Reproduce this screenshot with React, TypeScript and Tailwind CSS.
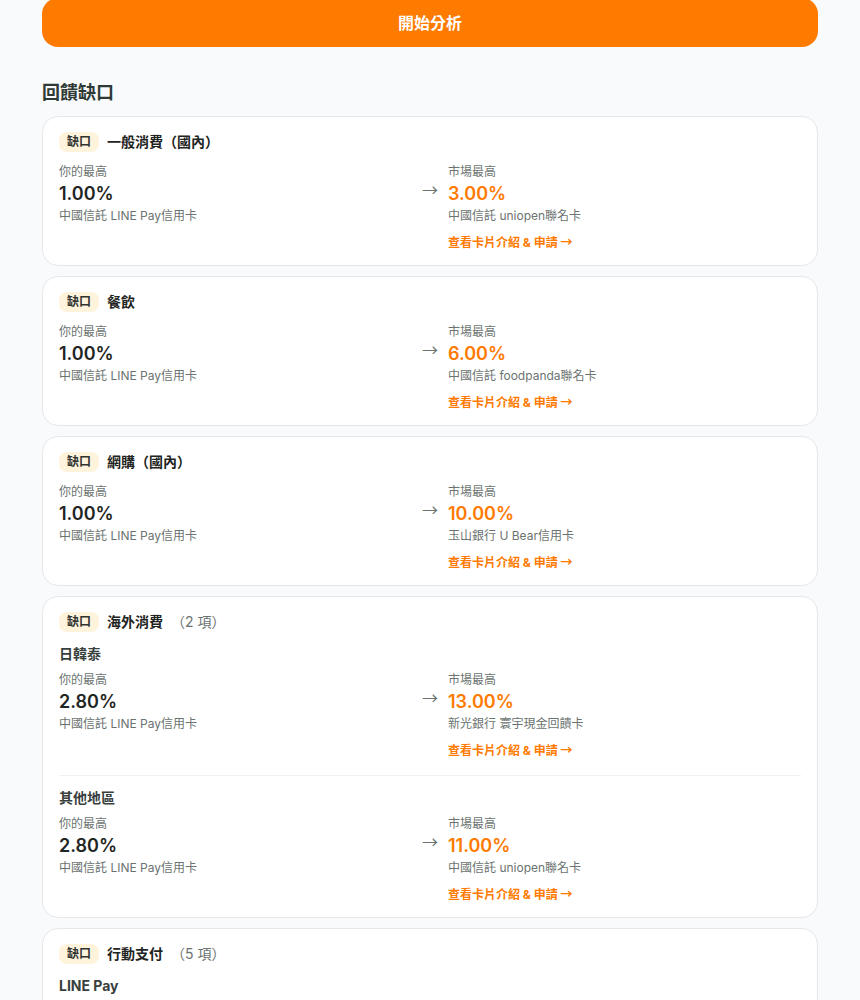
import React from 'react'

type Row = {
  mine: string
  mineCard: string
  market: string
  marketCard: string
}

type Section = { name?: string; row?: Row }

type Gap = {
  title: string
  count?: number
  sections: Section[]
}

const lineCard = '中國信託 LINE Pay信用卡'
const cjk = { fontFamily: "'Noto Sans CJK TC', sans-serif" }

const gaps: Gap[] = [
  {
    title: '一般消費（國內）',
    sections: [{ row: { mine: '1.00%', mineCard: lineCard, market: '3.00%', marketCard: '中國信託 uniopen聯名卡' } }],
  },
  {
    title: '餐飲',
    sections: [{ row: { mine: '1.00%', mineCard: lineCard, market: '6.00%', marketCard: '中國信託 foodpanda聯名卡' } }],
  },
  {
    title: '網購（國內）',
    sections: [{ row: { mine: '1.00%', mineCard: lineCard, market: '10.00%', marketCard: '玉山銀行 U Bear信用卡' } }],
  },
  {
    title: '海外消費',
    count: 2,
    sections: [
      { name: '日韓泰', row: { mine: '2.80%', mineCard: lineCard, market: '13.00%', marketCard: '新光銀行 寰宇現金回饋卡' } },
      { name: '其他地區', row: { mine: '2.80%', mineCard: lineCard, market: '11.00%', marketCard: '中國信託 uniopen聯名卡' } },
    ],
  },
  {
    title: '行動支付',
    count: 5,
    sections: [{ name: 'LINE Pay' }],
  },
]

function CompareRow({ row }: { row: Row }) {
  return (
    <div className="grid grid-cols-[1fr_auto_1fr] gap-2.5 items-start">
      <div>
        <p className="text-xs leading-4 text-[#6b7370]">你的最高</p>
        <p className="text-lg leading-7 font-semibold text-[#1f2522]">{row.mine}</p>
        <p className="text-xs leading-4 text-[#6b7370]">{row.mineCard}</p>
      </div>
      <span className="mt-[13px] text-base leading-6 text-[#6b7370]" style={cjk}>
        →
      </span>
      <div>
        <p className="text-xs leading-4 text-[#6b7370]">市場最高</p>
        <p className="text-lg leading-7 font-semibold text-[#ff7a00]">{row.market}</p>
        <p className="text-xs leading-4 text-[#6b7370]">{row.marketCard}</p>
        <a className="mt-2.5 block text-xs leading-4 font-bold text-[#ff7a00]">
          查看卡片介紹 &amp; 申請{' '}
          <span style={cjk}>→</span>
        </a>
      </div>
    </div>
  )
}

function GapCard({ gap }: { gap: Gap }) {
  return (
    <div className="bg-white rounded-2xl border border-[#e5e7eb] px-4 pt-[15px] pb-[14px]">
      <div className="flex items-center gap-2">
        <span className="rounded-lg bg-[#fff3dc] px-2 h-5 flex items-center text-xs font-bold text-[#2f3431]">
          缺口
        </span>
        <span className="text-sm leading-5 font-bold text-[#1f2522]">{gap.title}</span>
        {gap.count !== undefined && (
          <span className="text-sm leading-5 text-[#6b7370]">（{gap.count} 項）</span>
        )}
      </div>
      <div className="flex flex-col">
        {gap.sections.map((s, i) => (
          <div
            key={i}
            className={
              i > 0
                ? 'border-t border-[#f0f1f2] pt-3'
                : 'mt-3' + (gap.sections.length > 1 ? ' pb-4' : '')
            }
          >
            {s.name && (
              <p className="text-sm leading-5 font-bold text-[#37403c] mb-2">{s.name}</p>
            )}
            {s.row && <CompareRow row={s.row} />}
          </div>
        ))}
      </div>
    </div>
  )
}

export default function App() {
  return (
    <div
      className="min-h-screen bg-[#f9fafb] px-[42px] overflow-hidden"
      style={{ fontFamily: "Inter, 'Noto Sans CJK TC', sans-serif" }}
    >
      <button className="-mt-0.5 w-full h-[49px] rounded-2xl bg-[#ff7b00] text-white text-base font-bold flex items-center justify-center">
        開始分析
      </button>

      <h2 className="mt-[32px] text-lg leading-7 font-bold text-[#2f3a36]">回饋缺口</h2>

      <div className="mt-[9px] flex flex-col gap-[10px]">
        {gaps.map((g) => (
          <GapCard key={g.title} gap={g} />
        ))}
      </div>
    </div>
  )
}
